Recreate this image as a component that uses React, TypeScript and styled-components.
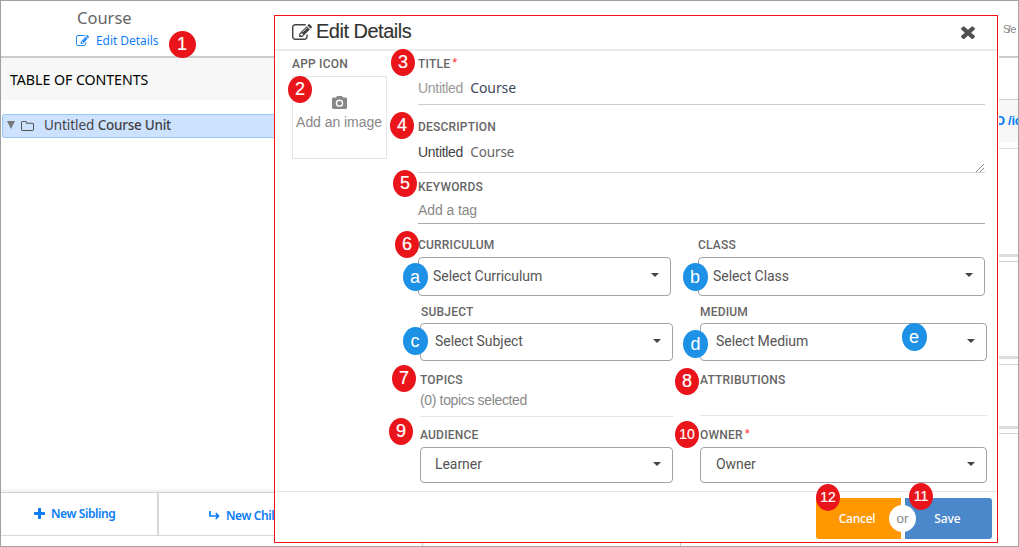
import React from 'react';
import styled, { createGlobalStyle } from 'styled-components';

const sans = `"Liberation Sans", Arial, sans-serif`;
const roboto = `Roboto, "Liberation Sans", sans-serif`;
const noto = `"Noto Sans", "Open Sans", sans-serif`;

const GlobalStyle = createGlobalStyle`
  * { box-sizing: border-box; }
  body { margin: 0; background: #fff; font-family: ${sans}; }
`;

const Page = styled.div`
  position: relative;
  width: 1019px;
  height: 547px;
  border: 1px solid #a0a0a0;
  background: #fff;
  display: flex;
  justify-content: space-between;
  overflow: hidden;
`;

const Text = styled.span<{ $size: number; $font?: string; $color?: string; $ls?: number; $weight?: number }>`
  font-family: ${p => p.$font || sans};
  font-size: ${p => p.$size}px;
  color: ${p => p.$color || '#555'};
  letter-spacing: ${p => p.$ls || 0}px;
  font-weight: ${p => p.$weight || 400};
  white-space: nowrap;
`;

/* ---------- page behind the dialog ---------- */

const Sidebar = styled.aside`
  width: 680px;
  display: flex;
  flex-direction: column;
`;

const CourseHeader = styled.header`
  height: 57px;
  border-bottom: 2px solid #ccc;
  padding: 5px 0 0 76px;
`;

const CourseName = styled.div`
  height: 24px;
  line-height: 24px;
`;

const EditLink = styled.a`
  display: flex;
  align-items: center;
  gap: 7px;
  height: 20px;
  margin-left: -1px;
`;

const TocBar = styled.div`
  height: 42px;
  background: #f7f7f7;
  display: flex;
  align-items: center;
  padding-left: 9px;
`;

const Tree = styled.div`
  flex: 1;
  padding: 14px 0 0 1px;
`;

const TreeRow = styled.div`
  height: 24px;
  border: 1px solid #99c9f8;
  border-radius: 2px;
  background: #cce2ff;
  display: flex;
  align-items: center;
  padding: 0 0 2px 4px;
`;

const Caret = styled.i<{ $w: number; $h: number; $color: string }>`
  width: 0;
  height: 0;
  border-left: ${p => p.$w / 2}px solid transparent;
  border-right: ${p => p.$w / 2}px solid transparent;
  border-top: ${p => p.$h}px solid ${p => p.$color};
`;

const FolderWrap = styled.span`
  display: flex;
  margin: 1px 10px 0 6px;
`;

const Actions = styled.footer`
  display: flex;
  height: 44px;
  border-top: 1px solid #d4d4d4;
  border-bottom: 1px solid #d8d8d8;
  box-shadow: 0 -2px 3px rgba(0, 0, 0, 0.07);
`;

const Action = styled.div<{ $w: number; $pad: number; $drop?: number; $lift?: number }>`
  width: ${p => p.$w}px;
  padding: ${p => p.$drop || 0}px 0 ${p => p.$lift || 0}px ${p => p.$pad}px;
  border-right: 2px solid #d8d8d8;
  display: flex;
  align-items: center;
  gap: 6px;
`;

const Tail = styled.div`
  display: flex;
  height: 10px;
`;

const TailCell = styled.div<{ $w: number }>`
  width: ${p => p.$w}px;
  border-right: 1px solid #ccc;
`;

const Strip = styled.div`
  width: 19px;
  display: flex;
  flex-direction: column;
  overflow: hidden;
`;

const StripCell = styled.div<{ $h: number; $line?: string; $thick?: number; $bg?: string; $pad?: number }>`
  height: ${p => p.$h}px;
  flex: none;
  border-bottom: ${p => p.$thick || 1}px solid ${p => p.$line || 'transparent'};
  background: ${p => p.$bg || 'transparent'};
  display: flex;
  align-items: center;
  padding-left: ${p => p.$pad || 0}px;
`;

const CutLink = styled(Text)`
  margin-left: -4px;
`;

/* ---------- dialog ---------- */

const Dialog = styled.section`
  position: absolute;
  left: 273px;
  top: 14px;
  width: 724px;
  height: 528px;
  border: 1px solid #f01414;
  background: #fff;
  display: flex;
  flex-direction: column;
`;

const DialogHeader = styled.header`
  height: 35px;
  border-bottom: 2px solid #ebebeb;
  display: flex;
  align-items: center;
  padding: 0 22px 2px 17px;
`;

const DialogTitle = styled.h1`
  margin: 0;
  padding: 0 0 2px 4px;
  flex: 1;
  font: 400 20px/30px ${sans};
  letter-spacing: -0.5px;
  color: #333;
  -webkit-text-stroke: 0.15px #333;
`;

const DialogBody = styled.div`
  height: 441px;
  display: flex;
  border-bottom: 1px solid #e6e6e6;
`;

const IconColumn = styled.div`
  width: 143px;
  padding: 6px 0 0 17px;
`;

const Upload = styled.div`
  margin-top: 5px;
  width: 95px;
  height: 83px;
  border: 1px solid #e6e6e6;
  display: flex;
  flex-direction: column;
  align-items: center;
  gap: 5px;
  padding: 19px 1px 0 0;
`;

const Fields = styled.div`
  width: 571px;
`;

const Field = styled.div<{ $h?: number; $top: number; $line?: string; $w?: number }>`
  width: ${p => p.$w || 567}px;
  ${p => (p.$h ? `height: ${p.$h}px;` : '')}
  padding-top: ${p => p.$top}px;
  border-bottom: ${p => (p.$line ? `1px solid ${p.$line}` : 'none')};
  flex: none;
`;

const Pair = styled.div<{ $shift?: number }>`
  display: flex;
  justify-content: space-between;
  width: 567px;
  margin-left: ${p => p.$shift || 0}px;
`;

const Label = styled.div<{ $indent?: number; $ls?: number }>`
  display: flex;
  height: 14px;
  padding-left: ${p => p.$indent || 0}px;
  font: 500 12px/15px ${roboto};
  letter-spacing: ${p => p.$ls ?? 0.2}px;
  color: #666;
  white-space: nowrap;
`;

const Star = styled.sup`
  color: #f33;
  font: 400 13px/12px ${sans};
  margin-left: 2px;
`;

const Value = styled.div<{ $gap: number }>`
  margin-top: ${p => p.$gap}px;
  height: 18px;
  display: flex;
  align-items: center;
  line-height: 18px;
`;

const Grip = styled.svg`
  margin: 32px 0 0 auto;
  display: block;
`;

const SelectBox = styled.div<{ $h: number; $gap: number; $pad: number }>`
  margin-top: ${p => p.$gap}px;
  height: ${p => p.$h}px;
  border: 1px solid #a2a2a2;
  border-radius: 4px;
  display: flex;
  align-items: center;
  justify-content: space-between;
  padding: 0 11px 2px ${p => p.$pad}px;
`;

const SelectCaret = styled(Caret)`
  margin-bottom: 1px;
`;

const DialogFooter = styled.footer`
  flex: 1;
  display: flex;
  justify-content: flex-end;
  gap: 4px;
  padding: 6px 5px 3px 0;
  position: relative;
`;

const Button = styled.button<{ $bg: string; $w: number; $left?: boolean }>`
  width: ${p => p.$w}px;
  height: 41px;
  border: 0;
  border-radius: ${p => (p.$left ? '3px 0 0 3px' : '0 3px 3px 0')};
  background: ${p => p.$bg};
  padding: ${p => (p.$left ? '0 3px 0 0' : '0 2px 0 0')};
`;

const Or = styled.span`
  position: absolute;
  left: 614px;
  top: 13px;
  width: 27px;
  height: 27px;
  border-radius: 50%;
  background: #fff;
  display: flex;
  align-items: center;
  justify-content: center;
`;

/* Numbered callouts pinned over the screen, positioned by centre. */
const Badge = styled.span<{ $x: number; $y: number; $w: number; $h: number; $blue: boolean; $size: number }>`
  position: absolute;
  left: ${p => p.$x - p.$w / 2 - 1}px;
  top: ${p => p.$y - p.$h / 2 - 1}px;
  width: ${p => p.$w}px;
  height: ${p => p.$h}px;
  border-radius: 50%;
  background: ${p => (p.$blue ? '#1c91e6' : '#e9151b')};
  color: #fff;
  font: 400 ${p => p.$size}px/${p => p.$h}px ${sans};
  -webkit-text-stroke: ${p => (p.$blue ? 0 : 0.2)}px #fff;
  text-align: center;
`;

const paths = {
  edit: 'M888 1184l116-116-152-152-116 116v56h96v96h56zM1328 464q-16-16-33 1l-350 350q-17 17-1 33t33-1l350-350q17-17 1-33zM1408 1058v190q0 119-84.5 203.5t-203.5 84.5h-832q-119 0-203.5-84.5t-84.5-203.5v-832q0-119 84.5-203.5t203.5-84.5h832q63 0 117 25 15 7 18 23 3 17-9 29l-49 49q-14 14-32 8-23-6-45-6h-832q-66 0-113 47t-47 113v832q0 66 47 113t113 47h832q66 0 113-47t47-113v-126q0-13 9-22l64-64q15-15 35-7t20 29zM1312 320l288 288-672 672h-288v-288zM1756 452l-92 92-288-288 92-92q28-28 68-28t68 28l152 152q28 28 28 68t-28 68z',
  times: 'M1490 1322q0 40-28 68l-136 136q-28 28-68 28t-68-28l-294-294-294 294q-28 28-68 28t-68-28l-136-136q-28-28-28-68t28-68l294-294-294-294q-28-28-28-68t28-68l136-136q28-28 68-28t68 28l294 294 294-294q28-28 68-28t68 28l136 136q28 28 28 68t-28 68l-294 294 294 294q28 28 28 68z',
  plus: 'M1600 736v192q0 40-28 68t-68 28h-416v416q0 40-28 68t-68 28h-192q-40 0-68-28t-28-68v-416h-416q-40 0-68-28t-28-68v-192q0-40 28-68t68-28h416v-416q0-40 28-68t68-28h192q40 0 68 28t28 68v416h416q40 0 68 28t28 68z',
  folder: 'M1600 1312v-704q0-40-28-68t-68-28h-704q-40 0-68-28t-28-68v-64q0-40-28-68t-68-28h-320q-40 0-68 28t-28 68v960q0 40 28 68t68 28h1216q40 0 68-28t28-68zM1728 608v704q0 92-66 158t-158 66h-1216q-92 0-158-66t-66-158v-960q0-92 66-158t158-66h320q92 0 158 66t66 158v32h672q92 0 158 66t66 158z',
};

const Icon = ({ name, w, h, color, box = '0 0 1792 1792' }: { name: keyof typeof paths; w: number; h: number; color: string; box?: string }) => (
  <svg width={w} height={h} viewBox={box} preserveAspectRatio="none" fill={color}>
    <path d={paths[name]} />
  </svg>
);

type SelectProps = { label: string; value: string; w: number; top: number; gap: number; h: number; pad?: number; indent?: number; required?: boolean };

const Select = ({ label, value, w, top, gap, h, pad = 14, indent = 0, required }: SelectProps) => (
  <Field $top={top} $w={w}>
    <Label $indent={indent}>{label}{required && <Star>*</Star>}</Label>
    <SelectBox $h={h} $gap={gap} $pad={pad}>
      <Text $size={14} $font={roboto} $color="#555" $ls={-0.05}>{value}</Text>
      <SelectCaret $w={8} $h={4} $color="#444" />
    </SelectBox>
  </Field>
);

const badges: [string, number, number, number?, number?][] = [
  ['1', 182, 44, 27, 27], ['2', 300, 89], ['3', 403, 62], ['4', 402, 125], ['5', 405, 183.5],
  ['6', 407, 244], ['7', 404, 378], ['8', 687, 381], ['9', 401, 431], ['10', 687, 434],
  ['11', 921, 496], ['12', 828, 497],
  ['a', 415, 277], ['b', 695, 277], ['c', 415, 341], ['d', 695.5, 344], ['e', 914, 337],
];

export default function App() {
  return (
    <>
      <GlobalStyle />
      <Page>
        <Sidebar>
          <CourseHeader>
            <CourseName><Text $size={16.5} $font={noto} $color="#666">Course</Text></CourseName>
            <EditLink>
              <Icon name="edit" w={13} h={11} color="#1a86f5" box="0 128 1792 1408" />
              <Text $size={12} $font={noto} $color="#0f80f5" $ls={-0.05}>Edit Details</Text>
            </EditLink>
          </CourseHeader>
          <TocBar><Text $size={14.2} $font={noto} $color="#000" $ls={-0.05}>TABLE OF CONTENTS</Text></TocBar>
          <Tree>
            <TreeRow>
              <Caret $w={9} $h={8} $color="#777" />
              <FolderWrap><Icon name="folder" w={13} h={10} color="#555" box="64 128 1664 1408" /></FolderWrap>
              <Text $size={13.5} $font={noto} $color="#444" $ls={-0.08}>Untitled&nbsp;</Text>
              <Text $size={13.5} $font={noto} $color="#444" $weight={500} $ls={-0.25}>Course Unit</Text>
            </TreeRow>
          </Tree>
          <Actions>
            <Action $w={158} $pad={33} $lift={2}>
              <Icon name="plus" w={11} h={11} color="#0a7cf5" box="192 128 1408 1408" />
              <Text $size={12} $font={noto} $color="#0a7cf5" $weight={600} $ls={-0.4}>New Sibling</Text>
            </Action>
            <Action $w={265} $pad={50} $drop={2}>
              <svg width="11" height="9" viewBox="0 0 11 9" fill="none" stroke="#0a7cf5" strokeWidth="1.7"><path d="M1 0v5h8M6.8 2l2.7 3-2.7 3" /></svg>
              <Text $size={12} $font={noto} $color="#0a7cf5" $weight={600} $ls={-0.4}>New Child</Text>
            </Action>
          </Actions>
          <Tail><TailCell $w={422} /><TailCell $w={258} /></Tail>
        </Sidebar>

        <Strip>
          <StripCell $h={57} $line="#ccc" $thick={2} $pad={4}><Text $size={11} $ls={-2.6} $color="#888">S</Text><Text $size={11} $ls={-0.6} $color="#888">/e</Text></StripCell>
          <StripCell $h={42} $line="#ccc" />
          <StripCell $h={42} $bg="#f7f7f7"><CutLink $size={13} $color="#0a7cf5" $weight={700} $ls={-0.3}>O&nbsp;/ic</CutLink></StripCell>
          <StripCell $h={7} $line="#ddd" />
          <StripCell $h={108} $line="#ddd" $thick={3} />
          <StripCell $h={5} $line="#d4d4d4" />
          <StripCell $h={97} $line="#ddd" $thick={3} />
          <StripCell $h={6} $line="#d4d4d4" />
          <StripCell $h={64} $line="#ddd" $thick={3} />
          <StripCell $h={5} $line="#d4d4d4" />
        </Strip>

        <Dialog>
          <DialogHeader>
            <Icon name="edit" w={20} h={16} color="#444" box="0 128 1792 1408" />
            <DialogTitle>Edit Details</DialogTitle>
            <Icon name="times" w={14} h={14} color="#505050" box="302 238 1188 1316" />
          </DialogHeader>
          <DialogBody>
            <IconColumn>
              <Label>APP ICON</Label>
              <Upload>
                <svg width="15" height="13" viewBox="2 2 20 18" preserveAspectRatio="none" fill="#888" fillRule="evenodd">
                  <path d="M9 2L7.2 4H4a2 2 0 0 0-2 2v12a2 2 0 0 0 2 2h16a2 2 0 0 0 2-2V6a2 2 0 0 0-2-2h-3.2L15 2zM12 7a5 5 0 1 0 0 10a5 5 0 0 0 0-10zM12 8.8a3.2 3.2 0 1 1 0 6.4a3.2 3.2 0 0 1 0-6.4z" />
                </svg>
                <Text $size={14} $color="#888" $ls={-0.05}>Add an image</Text>
              </Upload>
            </IconColumn>
            <Fields>
              <Field $h={54} $top={6} $line="#ccc">
                <Label>TITLE<Star>*</Star></Label>
                <Value $gap={8}>
                  <Text $size={14} $color="#999" $ls={-0.3}>Untitled&nbsp;&nbsp;</Text>
                  <Text $size={14} $font={noto} $color="#3c4a60" $ls={-0.1}>Course</Text>
                </Value>
              </Field>
              <Field $h={68} $top={15} $line="#d6d6d6">
                <Label>DESCRIPTION</Label>
                <Value $gap={9}>
                  <Text $size={14} $color="#444" $ls={-0.3}>Untitled&nbsp;&nbsp;</Text>
                  <Text $size={13.5} $font={noto} $color="#666" $ls={-0.1}>Course</Text>
                  <Grip width="10" height="10" viewBox="0 0 10 10" stroke="#888" strokeWidth="1"><path d="M1 9L9 1M5 9L9 5" /></Grip>
                </Value>
              </Field>
              <Field $h={51} $top={7} $line="#aaa">
                <Label>KEYWORDS</Label>
                <Value $gap={7}><Text $size={14} $color="#888" $ls={-0.1}>Add a tag</Text></Value>
              </Field>
              <Pair>
                <Select label="CURRICULUM" value="Select Curriculum" w={253} top={14} gap={5} h={39} />
                <Select label="CLASS" value="Select Class" w={287} top={14} gap={5} h={39} />
              </Pair>
              <Pair $shift={2}>
                <Select label="SUBJECT" value="Select Subject" w={253} top={9} gap={4} h={38} indent={1} />
                <Select label="MEDIUM" value="Select Medium" w={287} top={9} gap={4} h={38} pad={15} />
              </Pair>
              <Pair $shift={2}>
                <Field $h={56} $top={12} $w={253} $line="#e4e4e4">
                  <Label>TOPICS</Label>
                  <Value $gap={4}><Text $size={14} $color="#888" $ls={-0.35}>(0) topics selected</Text></Value>
                </Field>
                <Field $h={55} $top={12} $w={287} $line="#e4e4e4">
                  <Label>ATTRIBUTIONS</Label>
                </Field>
              </Pair>
              <Pair $shift={2}>
                <Select label="AUDIENCE" value="Learner" w={253} top={11} gap={5} h={36} />
                <Select label="OWNER" value="Owner" w={287} top={11} gap={5} h={36} pad={15} required />
              </Pair>
            </Fields>
          </DialogBody>
          <DialogFooter>
            <Button $bg="#ff9800" $w={85} $left><Text $size={12} $font={noto} $color="#fff" $weight={500} $ls={-0.25}>Cancel</Text></Button>
            <Button $bg="#4a87cb" $w={87}><Text $size={12} $font={noto} $color="#fff" $weight={500} $ls={-0.1}>Save</Text></Button>
            <Or><Text $size={13.5} $color="#888">or</Text></Or>
          </DialogFooter>
        </Dialog>

        {badges.map(([t, x, y, w, h]) => {
          const blue = t >= 'a';
          return (
            <Badge key={t} $x={x} $y={y} $w={w || (blue ? 25 : 24)} $h={h || (blue ? 28 : 27)} $blue={blue} $size={blue ? 18 : t.length > 1 ? 14 : 18}>{t}</Badge>
          );
        })}
      </Page>
    </>
  );
}
